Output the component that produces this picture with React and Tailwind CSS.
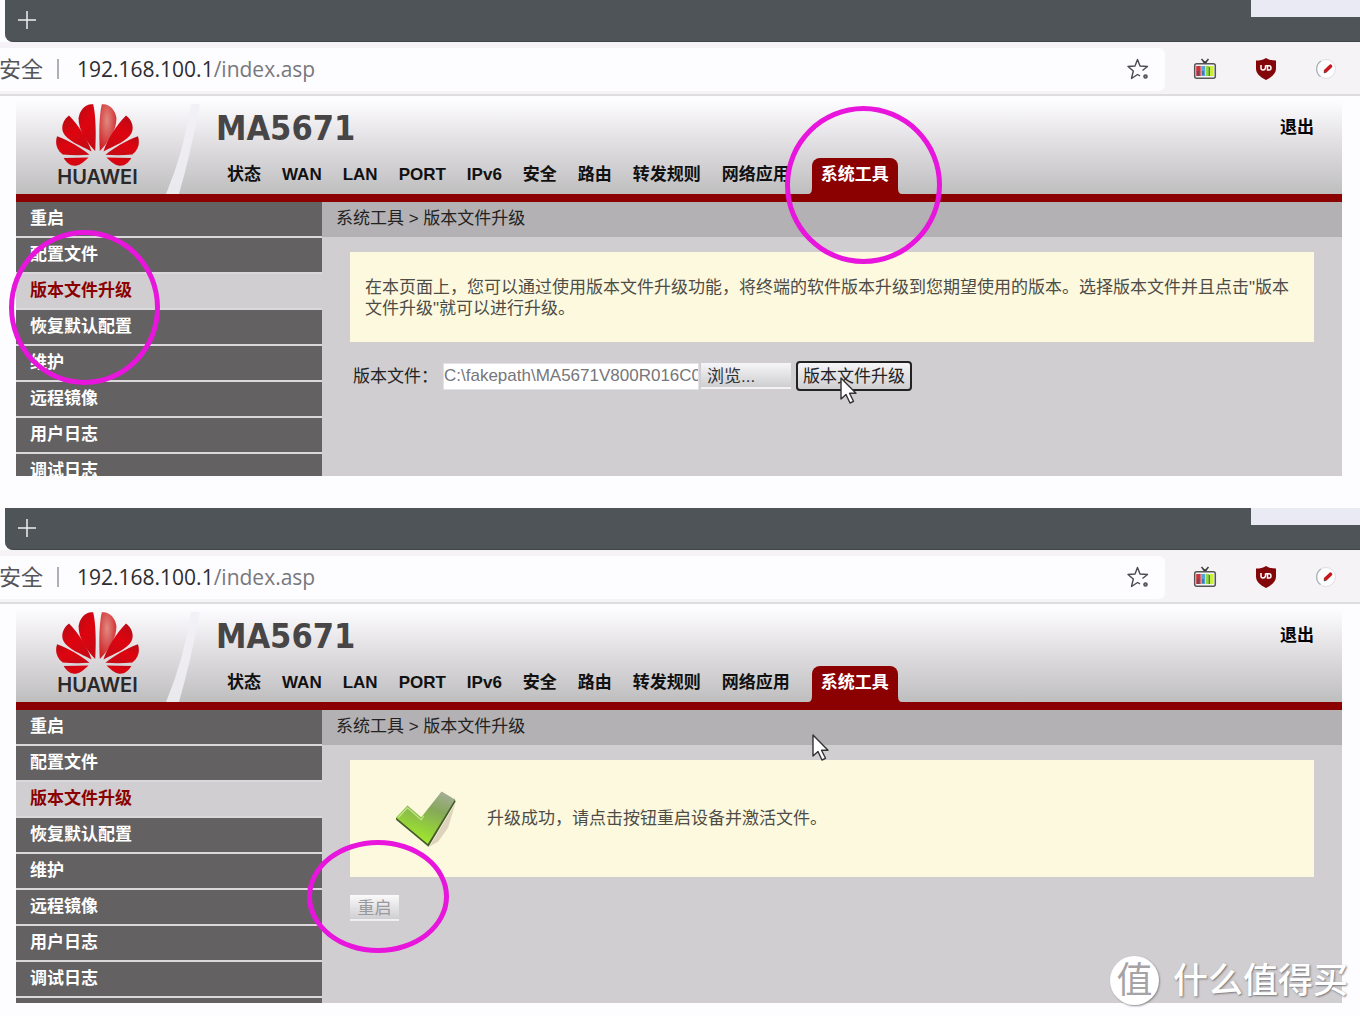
import React from "react";

const NAV = ["状态", "WAN", "LAN", "PORT", "IPv6", "安全", "路由", "转发规则", "网络应用"];
const MENU = ["重启", "配置文件", "版本文件升级", "恢复默认配置", "维护", "远程镜像", "用户日志", "调试日志"];

const PETALS = [
  "M136 157 C139 105 138 50 130 16 C108 12 88 34 86 58 C85 95 112 132 136 157Z",
  "M125 158 C112 120 88 82 57 50 C40 62 32 85 40 102 C50 125 92 142 125 158Z",
  "M119 168 C92 146 58 126 21 112 C15 130 18 152 38 167 C65 170 92 170 119 168Z",
  "M116 176 L41 178 C50 193 62 203 78 201 C92 198 104 188 116 176Z",
];

function HuaweiLogo({ id }) {
  return (
    <div className="flex w-[83px] flex-col items-center pt-[7px]">
      <svg viewBox="18 12 250 190" className="h-[63px] w-[83px]" aria-hidden="true">
        <defs>
          <radialGradient id={id + "shine"} cx="0.55" cy="0.35" r="0.7">
            <stop offset="0" stopColor="#e08a80" />
            <stop offset="1" stopColor="#cf1a20" />
          </radialGradient>
          <linearGradient id={id + "red"} x1="0" y1="0" x2="0.6" y2="1">
            <stop offset="0" stopColor="#b40c16" />
            <stop offset="0.5" stopColor="#de040f" />
            <stop offset="1" stopColor="#c80a14" />
          </linearGradient>
        </defs>
        {PETALS.map((d) => (
          <path key={d} d={d} fill={`url(#${id}red)`} />
        ))}
        <g transform="translate(286 0) scale(-1 1)">
          {PETALS.map((d, i) => (
            <path key={d} d={d} fill={i === 0 ? `url(#${id}shine)` : `url(#${id}red)`} />
          ))}
        </g>
      </svg>
      <span className="pt-px font-['Inter',sans-serif] text-[20px] leading-5 font-semibold text-[#2b2829]">HUAWEI</span>
    </div>
  );
}

function StarIcon() {
  return (
    <svg viewBox="0 0 22 22" className="size-[22px]" fill="none" stroke="#4a4a50" strokeWidth="1.4" aria-hidden="true">
      <path d="M15.500 12.500 20.500 8.500 13 8 10.500 1.500 8 8 1 8.500 6.300 13 4.500 20.500 10.500 16.500 13 17.800" strokeLinejoin="round" />
      <circle cx="18.500" cy="18.500" r="1.600" fill="#8a8a90" />
    </svg>
  );
}

function TvIcon() {
  return (
    <svg viewBox="0 0 24 22" className="h-[22px] w-6" aria-hidden="true">
      <path d="M8.500 1 12 5 15.500 1" fill="none" stroke="#444" strokeWidth="1.6" />
      <path d="M9.500 3.500h5L12 6z" fill="#333" />
      <rect x="1.700" y="5.700" width="20.600" height="14.600" rx="2" fill="#f4f4f4" stroke="#555" strokeWidth="1.500" />
      <rect x="3.200" y="8" width="4.500" height="10" fill="#c8353c" />
      <rect x="8.200" y="8" width="4" height="10" fill="#5aa2dd" />
      <rect x="12.800" y="8" width="3.200" height="10" fill="#8fd83f" />
      <rect x="16.600" y="8" width="4" height="10" fill="#c9ee3c" />
      <path d="M5 13v5M10 13v4M16.300 9v9" stroke="#3a4a70" strokeWidth="1" />
    </svg>
  );
}

function ShieldIcon() {
  return (
    <svg viewBox="0 0 22 24" className="h-6 w-[22px]" aria-hidden="true">
      <path d="M11 1c3 2 6 2.500 10 2.500v8c0 5-4 8.500-10 11.500C5 20 1 16.500 1 11.500v-8C5 3.500 8 3 11 1z" fill="#82060a" />
      <path d="M6 8v3q0 2 2 2t2.500-2V8.500M10.500 8.700H14q2 0 2 2.200T14 13h-1.500V9" fill="none" stroke="#fff" strokeWidth="1.500" />
    </svg>
  );
}

function PenIcon() {
  return (
    <svg viewBox="0 0 22 22" className="size-[22px]" aria-hidden="true">
      <circle cx="11" cy="11" r="9.500" fill="#fdfdfe" stroke="#dde0e2" />
      <path d="M6 3A9.500 9.500 0 0 0 5.500 18.600" fill="none" stroke="#a4b0b6" strokeWidth="1.200" />
      <path d="m10.500 13 5-4.800" stroke="#c8161d" strokeWidth="3.600" strokeLinecap="round" />
      <path d="m9 15 2-2" stroke="#555" strokeWidth="1.200" />
    </svg>
  );
}

function Cursor({ className }) {
  return (
    <svg viewBox="0 0 18 28" className={"pointer-events-none absolute h-7 w-[18px] " + className} aria-hidden="true">
      <path d="M1 1v21l5-4.500 4 8.500 3.500-1.700-4-8H16z" fill="#fff" stroke="#333" strokeWidth="1.400" strokeLinejoin="round" />
    </svg>
  );
}

function CheckMark() {
  return (
    <svg viewBox="25 22 192 180" className="h-[59px] w-[63px] shrink-0" aria-hidden="true">
      <defs>
        <linearGradient id="tick" x1="0.8" y1="0" x2="0.4" y2="1">
          <stop offset="0" stopColor="#a5ad98" />
          <stop offset="0.35" stopColor="#86a85a" />
          <stop offset="0.7" stopColor="#93cf3c" />
          <stop offset="1" stopColor="#a6ec2c" />
        </linearGradient>
      </defs>
      <path d="M132 198 212 66 190 140 160 182z" fill="#cfc3ac" opacity=".7" />
      <path d="M31 116 130 198 213 60 209 52 128 186 32 108z" fill="#45592a" />
      <path d="M31 109 66 72 108 108 170 30 211 54 128 190z" fill="url(#tick)" />
      <path d="M38 109 66 79 108 116 116 104" fill="none" stroke="#c9ee8f" strokeWidth="4" opacity=".8" />
    </svg>
  );
}

function TabFoot({ className }) {
  return (
    <svg viewBox="0 0 4 6" className={"absolute bottom-0 h-1.5 w-1 " + className} aria-hidden="true">
      <path d="M0 6Q4 6 4 0V6z" fill="#8b0000" />
    </svg>
  );
}

function Browser({ id, bodyClass, children, overlay }) {
  return (
    <section className="relative">
      <div className="ml-[5px] flex h-[42px] items-start justify-between rounded-bl-lg border-b border-[#3f4549] bg-[#4f5458]">
        <button aria-label="新建标签页" className="ml-3 flex h-10 w-5 items-center justify-center">
          <svg viewBox="0 0 18 18" className="size-[18px]" aria-hidden="true">
            <path d="M9 0v18M0 9h18" stroke="#eee" strokeWidth="1.500" />
          </svg>
        </button>
        <div className="h-[17px] w-[109px] bg-[#eaeaf4]" />
      </div>

      <div className="flex h-[54px] items-center border-b-2 border-[#dddcdf] bg-[#f5f3f6] pt-0.5">
        <div className="flex h-[43px] flex-1 items-center rounded-r-md bg-[#fdfcff] pr-4">
          <span className="-ml-px text-[22px] text-[#55565a]">安全</span>
          <span className="mr-[18px] ml-3.5 h-5 w-0.5 bg-[#b0afb3]" />
          <div className="flex-1 pt-0.5 font-['Open_Sans','Noto_Sans',sans-serif] text-[21px] text-[#77787c]">
            <span className="text-[#2c2d31]">192.168.100.1</span>/index.asp
          </div>
          <button aria-label="收藏"><StarIcon /></button>
        </div>
        <div className="flex items-center gap-[38px] pr-[23px] pl-7">
          <button aria-label="电视"><TvIcon /></button>
          <button aria-label="uBlock"><ShieldIcon /></button>
          <button aria-label="编辑"><PenIcon /></button>
        </div>
      </div>

      <div className="mr-[18px] ml-4">
        <header className="flex h-[98px] bg-linear-to-b from-[#fdfcff] from-5% via-[#dcdadd] via-55% to-[#bfbebf]">
          <div className="w-[148px] pl-10">
            <HuaweiLogo id={id} />
          </div>
          <svg viewBox="0 0 40 98" className="h-[98px] w-10 shrink-0" aria-hidden="true">
            <path d="M2 98 Q20 55 27 8 L36 8 Q26 60 15 98z" fill="#f1f0f5" opacity=".85" />
          </svg>
          <div className="flex flex-1 flex-col justify-between pl-[7px]">
            <div className="flex items-start justify-between pt-3 pr-7 pl-[5px]">
              <h1 className="font-['DejaVu_Sans_Condensed','DejaVu_Sans',sans-serif] text-[34px] leading-10 font-bold text-[#474546]">MA5671</h1>
              <a href="#logout" className="pt-2 leading-6 font-bold text-black">退出</a>
            </div>
            <nav className="flex items-end pl-4 font-bold whitespace-nowrap text-[#111]">
              <div className="flex h-9 gap-[21px]">
                {NAV.map((n) => (
                  <a key={n} href={"#" + n} className="leading-[34px]">{n}</a>
                ))}
              </div>
              <a href="#系统工具" className="relative ml-[22px] h-9 rounded-t-lg bg-[#8b0000] px-[9px] leading-[34px] text-white">
                <TabFoot className="-left-1" />
                系统工具
                <TabFoot className="-right-1 -scale-x-100" />
              </a>
            </nav>
          </div>
        </header>
        <div className="h-2 bg-[#8b0000]" />
        <div className={"flex overflow-hidden bg-[#d0ced0] " + bodyClass}>
          <aside className="w-[306px] shrink-0">
            {MENU.map((m) => (
              <a
                key={m}
                href={"#" + m}
                className={
                  "flex h-9 items-center border-b-2 border-[#dad8da] pl-3.5 font-bold " +
                  (m === "版本文件升级" ? "bg-[#d0ced0] text-[#8b0000]" : "bg-[#636162] text-white")
                }
              >
                {m}
              </a>
            ))}
            <div className="h-9 bg-[#636162]" />
          </aside>
          <main className="flex-1">
            <div className="flex h-[35px] items-center bg-[#b3b1b3] pb-0.5 pl-3.5 text-[#222]">系统工具 &gt; 版本文件升级</div>
            <div className="pt-[15px] pr-7 pl-7">{children}</div>
          </main>
        </div>
      </div>
      {overlay}
    </section>
  );
}

const RING = "pointer-events-none absolute rounded-[50%] border-[5px] border-[#e815dc] ";

export default function App() {
  return (
    <div className="relative flex flex-col gap-8 overflow-hidden bg-[#fdfcff] pb-[13px] font-['Liberation_Sans','Noto_Sans_CJK_SC',sans-serif] text-[17px]">
      <Browser
        id="a"
        bodyClass="h-[274px]"
        overlay={
          <>
            <div className={RING + "top-[106px] left-[785px] h-[158px] w-[157px]"} />
            <div className={RING + "top-[230px] left-[9px] h-[155px] w-[151px]"} />
            <Cursor className="top-[377px] left-[840px]" />
          </>
        }
      >
        <p className="bg-[#fdf9df] px-[15px] pt-[25px] pb-[23px] leading-[21px] text-[#4d4c46]">
          在本页面上，您可以通过使用版本文件升级功能，将终端的软件版本升级到您期望使用的版本。选择版本文件并且点击"版本文件升级"就可以进行升级。
        </p>
        <form className="flex items-center pt-[19px] pl-[3px]" onSubmit={(e) => e.preventDefault()}>
          <label htmlFor="file" className="w-[90px] pt-0.5 whitespace-nowrap text-[#222]">版本文件：</label>
          <input id="file" type="text" readOnly value="C:\fakepath\MA5671V800R016C0" className="h-[27px] w-[256px] border border-[#e2e1e3] bg-white text-[#77767a]" />
          <button type="button" className="ml-0.5 h-[26px] w-[90px] border-b-2 border-[#f3f2f4] bg-linear-to-b from-[#f6f5f7] to-[#cfced1] pt-0.5 pl-1.5 text-left leading-6 text-[#333]">浏览...</button>
          <button type="submit" className="ml-[5px] h-[30px] w-[116px] rounded-sm border-2 border-[#222] bg-linear-to-b from-[#f6f5f7] to-[#cfced1] pt-0.5 leading-6 whitespace-nowrap text-[#222]">版本文件升级</button>
        </form>
      </Browser>

      <Browser
        id="b"
        bodyClass="h-[293px]"
        overlay={
          <>
            <div className={RING + "top-[332px] left-[307px] h-[113px] w-[142px]"} />
            <Cursor className="top-[226px] left-[812px]" />
            <div className="pointer-events-none absolute right-3 -bottom-0.5 flex items-center gap-3.5 text-white">
              <span className="flex size-[49px] items-center justify-center rounded-full bg-white text-[36px] leading-none text-[#a5a3a6] shadow-[1px_1px_2px_#8a888b]">值</span>
              <span className="text-[35px] leading-[49px] font-medium whitespace-nowrap [text-shadow:1px_1px_2px_#777578]">什么值得买</span>
            </div>
          </>
        }
      >
        <div className="flex h-[117px] items-center bg-[#fdf9df] pl-11 text-[#4d4c46]">
          <CheckMark />
          <p className="pl-[30px]">升级成功，请点击按钮重启设备并激活文件。</p>
        </div>
        <button className="mt-[18px] h-[26px] w-[49px] border-b-2 border-[#efeef0] bg-linear-to-b from-[#fafafb] to-[#cfced1] pt-1 leading-5 text-[#99989b]">重启</button>
      </Browser>
    </div>
  );
}
